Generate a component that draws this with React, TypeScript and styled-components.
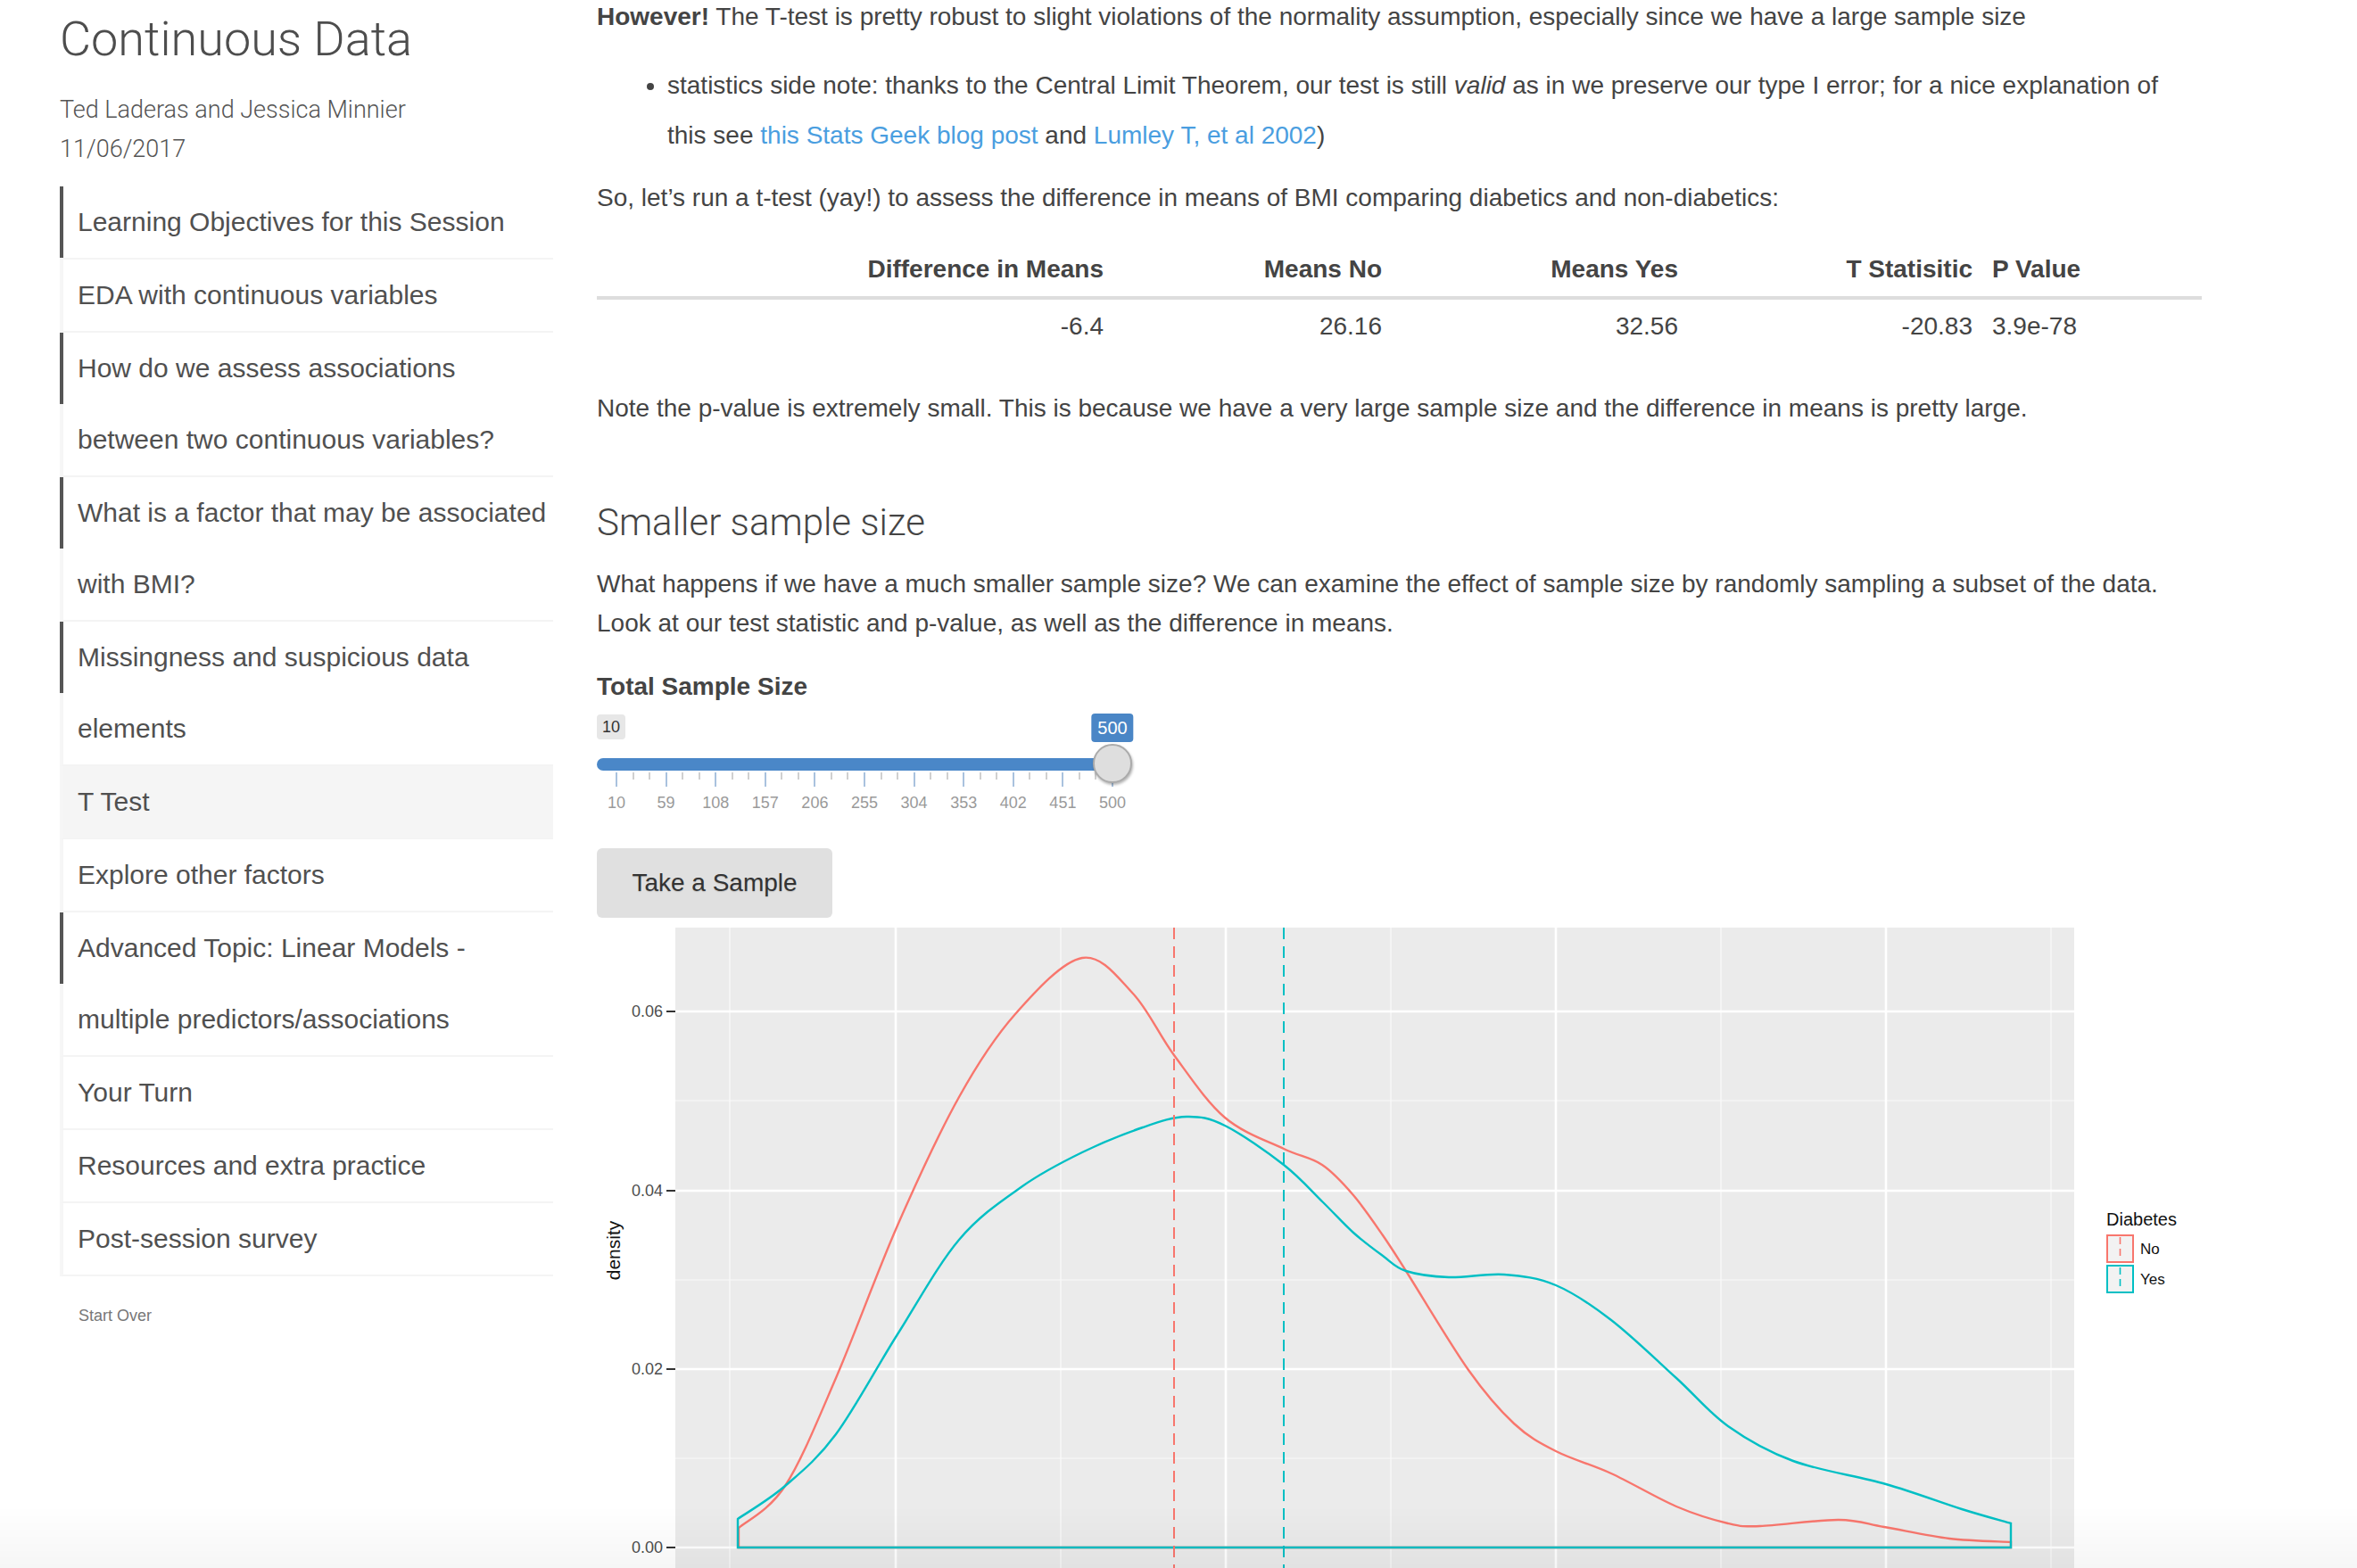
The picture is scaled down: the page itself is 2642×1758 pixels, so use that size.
import React from 'react'
import styled, { createGlobalStyle } from 'styled-components'

const GlobalStyle = createGlobalStyle`
  html, body {
    margin: 0;
    padding: 0;
    background: #ffffff;
    overflow: hidden;
  }
  body {
    font-family: 'Liberation Sans', Arial, sans-serif;
    color: #444;
  }
`

const lightFont = `'Roboto Light', 'Lato Light', Roboto, 'Liberation Sans', sans-serif`

const Page = styled.div`
  display: flex;
  align-items: flex-start;
  width: 2642px;
  min-height: 1758px;
`

const Sidebar = styled.nav`
  width: 553px;
  padding-left: 67px;
  flex-shrink: 0;
`

const Title = styled.h1`
  margin: 14px 0 0;
  font-family: ${lightFont};
  font-weight: 300;
  font-size: 54px;
  line-height: 60px;
  color: #4d4d4d;
  white-space: nowrap;
`

const Byline = styled.div<{ first?: boolean }>`
  margin-top: ${({ first }) => (first ? '27px' : '0')};
  font-family: ${lightFont};
  font-weight: 300;
  font-size: 27px;
  line-height: 44px;
  color: #555;
`

const TopicList = styled.div`
  margin-top: 20px;
`

const Topic = styled.div<{ done?: boolean; active?: boolean }>`
  position: relative;
  border-left: 4px solid #f6f6f6;
  border-bottom: 2px solid #f4f4f4;
  padding-left: 16px;
  font-size: 30px;
  line-height: 80px;
  color: #505050;
  white-space: nowrap;
  background: ${({ active }) => (active ? '#f5f5f5' : 'transparent')};

  &::before {
    content: '';
    display: ${({ done }) => (done ? 'block' : 'none')};
    position: absolute;
    left: -4px;
    top: 0;
    width: 4px;
    height: 80px;
    background: #555;
  }
`

const StartOver = styled.div`
  margin-top: 34px;
  padding-left: 21px;
  font-size: 18px;
  color: #777;
`

const Main = styled.main`
  width: 1799px;
  margin-left: 49px;
  font-size: 28px;
  line-height: 44px;
  color: #444;
`

const Para = styled.p<{ gap: number }>`
  margin: ${({ gap }) => gap}px 0 0;
`

const Bullets = styled.ul`
  margin: 27px 0 0;
  padding-left: 79px;
  line-height: 56px;
`

const Link = styled.a`
  color: #4a9ee0;
  text-decoration: none;
`

const StatsTable = styled.div`
  margin-top: 28px;
  display: grid;
  grid-template-columns: 579px 312px 332px 330px 1fr;
`

const Cell = styled.div<{ head?: boolean; left?: boolean }>`
  padding: 0 11px;
  line-height: 60px;
  text-align: ${({ left }) => (left ? 'left' : 'right')};
  font-weight: ${({ head }) => (head ? 700 : 400)};
  border-bottom: ${({ head }) => (head ? '4px solid #dddddd' : 'none')};
  white-space: nowrap;
`

const Heading = styled.h3`
  margin: 76px 0 0;
  font-family: ${lightFont};
  font-weight: 300;
  font-size: 42px;
  line-height: 60px;
  color: #444;
`

const InputLabel = styled.div`
  margin-top: 27px;
  font-weight: 700;
`

const Slider = styled.div`
  position: relative;
  margin-top: 8px;
  width: 600px;
  height: 120px;
`

const Badge = styled.span<{ primary?: boolean }>`
  position: absolute;
  top: ${({ primary }) => (primary ? '0' : '1px')};
  padding: 0 ${({ primary }) => (primary ? '7px' : '6px')};
  height: ${({ primary }) => (primary ? '32px' : '28px')};
  line-height: ${({ primary }) => (primary ? '32px' : '28px')};
  border-radius: 4px;
  font-size: ${({ primary }) => (primary ? '20px' : '18px')};
  background: ${({ primary }) => (primary ? '#4a86c6' : '#e7e7e7')};
  color: ${({ primary }) => (primary ? '#fff' : '#333')};
  transform: ${({ primary }) => (primary ? 'translateX(-50%)' : 'none')};
`

const Track = styled.div`
  position: absolute;
  left: 0;
  top: 50px;
  height: 14px;
  border-radius: 7px;
  background: #4a87c8;
`

const Handle = styled.div`
  position: absolute;
  top: 34px;
  width: 40px;
  height: 40px;
  margin-left: -22px;
  border-radius: 50%;
  background: #dedede;
  border: 2px solid #ababab;
  box-shadow: 1px 2px 3px rgba(0, 0, 0, 0.3);
`

const Tick = styled.span<{ major?: boolean }>`
  position: absolute;
  top: 66px;
  width: 2px;
  margin-left: -1px;
  height: ${({ major }) => (major ? '16px' : '8px')};
  background: ${({ major }) => (major ? '#a9c2de' : '#d0d0d0')};
`

const TickLabel = styled.span`
  position: absolute;
  top: 88px;
  font-size: 18px;
  line-height: 24px;
  color: #9a9a9a;
  transform: translateX(-50%);
`

const Button = styled.button`
  display: block;
  margin-top: 31px;
  width: 264px;
  height: 78px;
  border: none;
  border-radius: 6px;
  background: #e0e0e0;
  font-family: 'Liberation Sans', Arial, sans-serif;
  font-size: 28px;
  color: #333;
  text-shadow: 0 1px 1px rgba(0, 0, 0, 0.15);
`

const PlotBox = styled.div`
  margin-top: 11px;
  width: 1799px;
  height: 740px;
`

const BottomFade = styled.div`
  position: fixed;
  left: 0;
  right: 0;
  bottom: 0;
  height: 70px;
  pointer-events: none;
  background: linear-gradient(to bottom, rgba(0, 0, 0, 0), rgba(0, 0, 0, 0.035));
`

const topics = [
  { lines: ['Learning Objectives for this Session'], done: true },
  { lines: ['EDA with continuous variables'] },
  { lines: ['How do we assess associations', 'between two continuous variables?'], done: true },
  { lines: ['What is a factor that may be associated', 'with BMI?'], done: true },
  { lines: ['Missingness and suspicious data', 'elements'], done: true },
  { lines: ['T Test'], active: true },
  { lines: ['Explore other factors'] },
  { lines: ['Advanced Topic: Linear Models -', 'multiple predictors/associations'], done: true },
  { lines: ['Your Turn'] },
  { lines: ['Resources and extra practice'] },
  { lines: ['Post-session survey'] },
]

const header = ['Difference in Means', 'Means No', 'Means Yes', 'T Statisitic', 'P Value']
const values = ['-6.4', '26.16', '32.56', '-20.83', '3.9e-78']

const sliderMin = 10
const sliderMax = 500
const gridLeft = 22
const gridWidth = 556
const toX = (v: number) => gridLeft + ((v - sliderMin) / (sliderMax - sliderMin)) * gridWidth

type Pt = [number, number]

function smooth(pts: Pt[]) {
  let d = `M${pts[0][0]},${pts[0][1]}`
  for (let i = 0; i < pts.length - 1; i++) {
    const p0 = pts[i - 1] || pts[i]
    const p1 = pts[i]
    const p2 = pts[i + 1]
    const p3 = pts[i + 2] || p2
    const c1x = p1[0] + (p2[0] - p0[0]) / 6
    const c1y = p1[1] + (p2[1] - p0[1]) / 6
    const c2x = p2[0] - (p3[0] - p1[0]) / 6
    const c2y = p2[1] - (p3[1] - p1[1]) / 6
    d += ` C${c1x.toFixed(1)},${c1y.toFixed(1)} ${c2x.toFixed(1)},${c2y.toFixed(1)} ${p2[0]},${p2[1]}`
  }
  return d
}

// density curves, in plot pixels (panel starts at x=88)
const redPts: Pt[] = [
  [159, 673], [211, 626], [268, 505], [337, 334], [406, 190], [469, 97], [544, 34], [601, 74],
  [647, 143], [704, 213], [770, 248], [813, 266], [848, 300], [881, 345], [907, 385], [977, 496],
  [1028, 556], [1075, 587], [1137, 612], [1210, 649], [1268, 668], [1304, 671], [1392, 664],
  [1443, 672], [1516, 685], [1585, 689],
]

const tealPts: Pt[] = [
  [158, 663], [211, 626], [268, 568], [337, 456], [406, 350], [477, 290], [544, 252], [612, 224],
  [661, 212], [704, 222], [770, 266], [814, 308], [848, 342], [881, 368], [907, 385], [955, 392],
  [1017, 389], [1075, 401], [1137, 440], [1210, 505], [1268, 559], [1341, 598], [1445, 624],
  [1530, 652], [1585, 668],
]

const RED = '#F8766D'
const TEAL = '#00BFC4'
const baseY = 695
const yMajor = [
  { y: 94, label: '0.06' },
  { y: 295, label: '0.04' },
  { y: 495, label: '0.02' },
  { y: 695, label: '0.00' },
]
const yMinor = [194, 395, 595]
const xMajor = [335, 705, 1075, 1445]
const xMinor = [149, 520, 890, 1260, 1630]

function DensityPlot() {
  const panelL = 88
  const panelR = 1656
  return (
    <svg width="1799" height="740" viewBox="0 0 1799 740">
      <rect x={panelL} y={0} width={panelR - panelL} height={740} fill="#ebebeb" />
      {yMinor.map((y) => (
        <line key={'ym' + y} x1={panelL} x2={panelR} y1={y} y2={y} stroke="#fafafa" strokeWidth={1.2} />
      ))}
      {xMinor.map((x) => (
        <line key={'xm' + x} x1={x} x2={x} y1={0} y2={740} stroke="#fafafa" strokeWidth={1.2} />
      ))}
      {yMajor.map((t) => (
        <line key={'yM' + t.y} x1={panelL} x2={panelR} y1={t.y} y2={t.y} stroke="#ffffff" strokeWidth={2.6} />
      ))}
      {xMajor.map((x) => (
        <line key={'xM' + x} x1={x} x2={x} y1={0} y2={740} stroke="#ffffff" strokeWidth={2.6} />
      ))}

      <path d={smooth(redPts) + ` L1585,${baseY} L159,${baseY} Z`} fill="none" stroke={RED} strokeWidth={2.4} />
      <path d={smooth(tealPts) + ` L1585,${baseY} L158,${baseY} Z`} fill="none" stroke={TEAL} strokeWidth={2.4} />

      <line x1={647} x2={647} y1={0} y2={740} stroke={RED} strokeWidth={2} strokeDasharray="13 8" />
      <line x1={770} x2={770} y1={0} y2={740} stroke={TEAL} strokeWidth={2} strokeDasharray="13 8" />

      {yMajor.map((t) => (
        <g key={'yl' + t.y}>
          <line x1={78} x2={panelL} y1={t.y} y2={t.y} stroke="#333" strokeWidth={2} />
          <text
            x={74}
            y={t.y + 6}
            textAnchor="end"
            fontFamily="'Liberation Sans', Arial, sans-serif"
            fontSize={18}
            fill="#4d4d4d"
          >
            {t.label}
          </text>
        </g>
      ))}
      <text
        x={26}
        y={362}
        transform="rotate(-90 26 362)"
        textAnchor="middle"
        fontFamily="'Liberation Sans', Arial, sans-serif"
        fontSize={21}
        fill="#111"
      >
        density
      </text>

      <text x={1692} y={334} fontFamily="'Liberation Sans', Arial, sans-serif" fontSize={20} fill="#111">
        Diabetes
      </text>
      {[
        { y: 345, color: RED, label: 'No' },
        { y: 379, color: TEAL, label: 'Yes' },
      ].map((k) => (
        <g key={k.label}>
          <rect x={1693} y={k.y} width={29} height={30} fill="#f2f2f2" stroke={k.color} strokeWidth={2} />
          <line x1={1707.5} x2={1707.5} y1={k.y + 2} y2={k.y + 28} stroke={k.color} strokeWidth={1.6} strokeDasharray="8 5" />
          <text x={1730} y={k.y + 21} fontFamily="'Liberation Sans', Arial, sans-serif" fontSize={17} fill="#111">
            {k.label}
          </text>
        </g>
      ))}
    </svg>
  )
}

function SampleSlider() {
  const majors: number[] = []
  for (let i = 0; i <= 10; i++) majors.push(sliderMin + i * 49)
  const minors: number[] = []
  for (let i = 0; i < 10; i++) {
    minors.push(sliderMin + i * 49 + 49 / 3)
    minors.push(sliderMin + i * 49 + (2 * 49) / 3)
  }
  const handleX = toX(500)
  return (
    <Slider>
      <Badge style={{ left: 0 }}>10</Badge>
      <Badge primary style={{ left: handleX }}>
        500
      </Badge>
      <Track style={{ width: handleX }} />
      {minors.map((v) => (
        <Tick key={'m' + v} style={{ left: toX(v) }} />
      ))}
      {majors.map((v) => (
        <Tick major key={'M' + v} style={{ left: toX(v) }} />
      ))}
      {majors.map((v) => (
        <TickLabel key={'l' + v} style={{ left: toX(v) }}>
          {v}
        </TickLabel>
      ))}
      <Handle style={{ left: handleX }} />
    </Slider>
  )
}

export default function App() {
  return (
    <>
      <GlobalStyle />
      <Page>
        <Sidebar>
          <Title>Continuous Data</Title>
          <Byline first>Ted Laderas and Jessica Minnier</Byline>
          <Byline>11/06/2017</Byline>
          <TopicList>
            {topics.map((t) => (
              <Topic key={t.lines[0]} done={t.done} active={t.active}>
                {t.lines.map((l) => (
                  <div key={l}>{l}</div>
                ))}
              </Topic>
            ))}
          </TopicList>
          <StartOver>Start Over</StartOver>
        </Sidebar>

        <Main>
          <Para gap={-3}>
            <strong>However!</strong> The T-test is pretty robust to slight violations of the normality
            assumption, especially since we have a large sample size
          </Para>
          <Bullets>
            <li>
              statistics side note: thanks to the Central Limit Theorem, our test is still <em>valid</em> as
              in we preserve our type I error; for a nice explanation of this see{' '}
              <Link href="#">this Stats Geek blog post</Link> and <Link href="#">Lumley T, et al 2002</Link>)
            </li>
          </Bullets>
          <Para gap={20}>
            So, let’s run a t-test (yay!) to assess the difference in means of BMI comparing diabetics and
            non-diabetics:
          </Para>
          <StatsTable>
            {header.map((h, i) => (
              <Cell head left={i === 4} key={h}>
                {h}
              </Cell>
            ))}
            {values.map((v, i) => (
              <Cell left={i === 4} key={v}>
                {v}
              </Cell>
            ))}
          </StatsTable>
          <Para gap={40}>
            Note the p-value is extremely small. This is because we have a very large sample size and the
            difference in means is pretty large.
          </Para>
          <Heading>Smaller sample size</Heading>
          <Para gap={17}>
            What happens if we have a much smaller sample size? We can examine the effect of sample size by
            randomly sampling a subset of the data. Look at our test statistic and p-value, as well as the
            difference in means.
          </Para>
          <InputLabel>Total Sample Size</InputLabel>
          <SampleSlider />
          <Button>Take a Sample</Button>
          <PlotBox>
            <DensityPlot />
          </PlotBox>
        </Main>
      </Page>
      <BottomFade />
    </>
  )
}
